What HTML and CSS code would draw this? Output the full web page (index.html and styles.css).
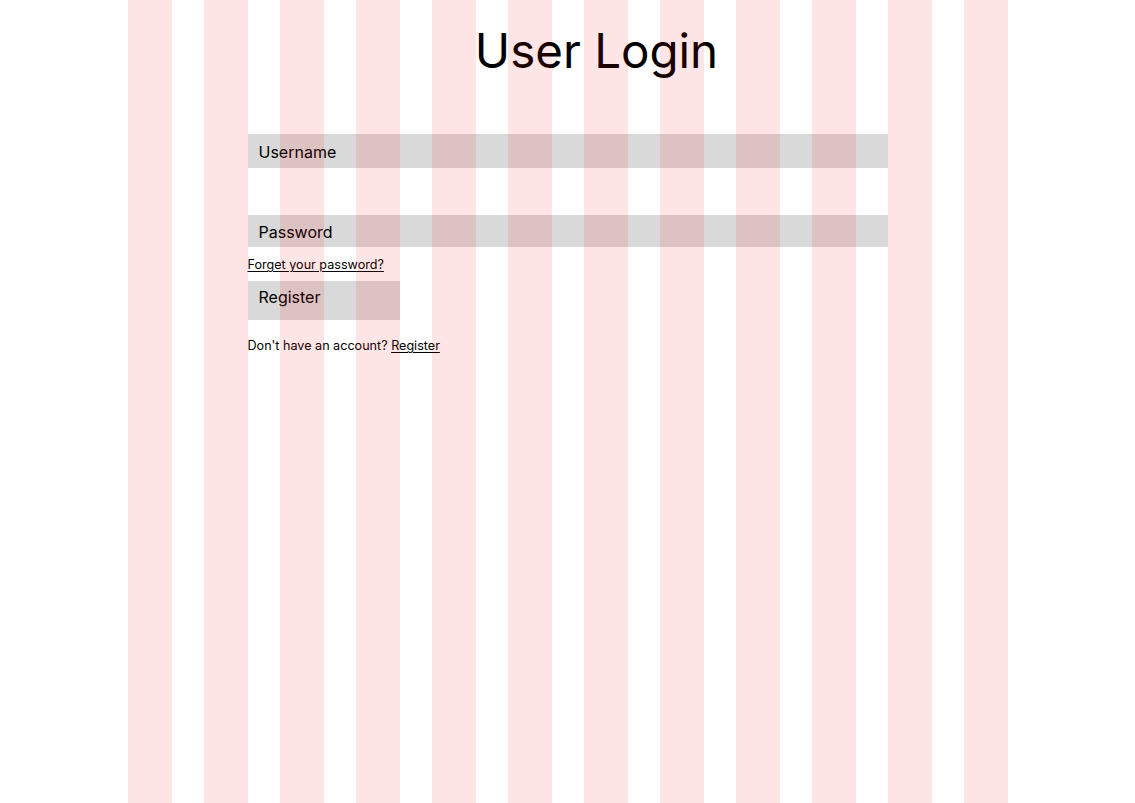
FILE: index.html
```html
<!DOCTYPE html>
<html lang="en">
<head>
<meta charset="utf-8">
<title>User Login</title>
<link rel="stylesheet" href="styles.css">
</head>
<body>
<main class="page">
  <h1 class="title">User Login</h1>
  <form class="login">
    <div class="field field-user">Username</div>
    <div class="field field-pass">Password</div>
    <a class="link forgot" href="#">Forget your password?</a>
    <div class="btn">Register</div>
    <p class="signup">Don't have an account? <a class="link" href="#">Register</a></p>
  </form>
</main>
<div class="grid-overlay">
  <div class="col"></div><div class="col"></div><div class="col"></div><div class="col"></div>
  <div class="col"></div><div class="col"></div><div class="col"></div><div class="col"></div>
  <div class="col"></div><div class="col"></div><div class="col"></div><div class="col"></div>
</div>
</body>
</html>
```
FILE: styles.css
```css
html, body {
  margin: 0;
  padding: 0;
  background: #fff;
}
body {
  font-family: Inter, "Noto Sans", sans-serif;
  color: #000;
}
.title {
  margin: 22px 0 0;
  padding-left: 58px;
  text-align: center;
  font-size: 47.5px;
  font-weight: 400;
  line-height: 58px;
}
.login {
  width: 640px;
  margin: 54px auto 0;
  display: flex;
  flex-direction: column;
  align-items: flex-start;
}
.field {
  align-self: stretch;
  box-sizing: border-box;
  background: #d9d9d9;
  font-size: 16px;
  padding: 2px 11px 0;
  display: flex;
  align-items: center;
}
.field-user {
  height: 34px;
}
.field-pass {
  height: 32px;
  margin-top: 47px;
}
.link {
  color: #000;
  text-decoration: underline;
  text-decoration-thickness: 1px;
  text-underline-offset: 2px;
}
.forgot {
  margin-top: 10px;
  font-size: 12.6px;
  line-height: 16px;
}
.btn {
  margin-top: 8px;
  width: 152px;
  height: 39px;
  box-sizing: border-box;
  padding: 7px 11px 0;
  font-size: 16px;
  line-height: 19px;
  background: #d9d9d9;
}
.signup {
  margin: 18px 0 0;
  font-size: 12.6px;
  line-height: 16px;
}
.grid-overlay {
  position: fixed;
  top: 0;
  left: 0;
  right: 0;
  bottom: 0;
  display: flex;
  justify-content: center;
  gap: 32px;
  pointer-events: none;
}
.col {
  width: 44px;
  background: rgba(255, 0, 0, 0.1);
}
```
